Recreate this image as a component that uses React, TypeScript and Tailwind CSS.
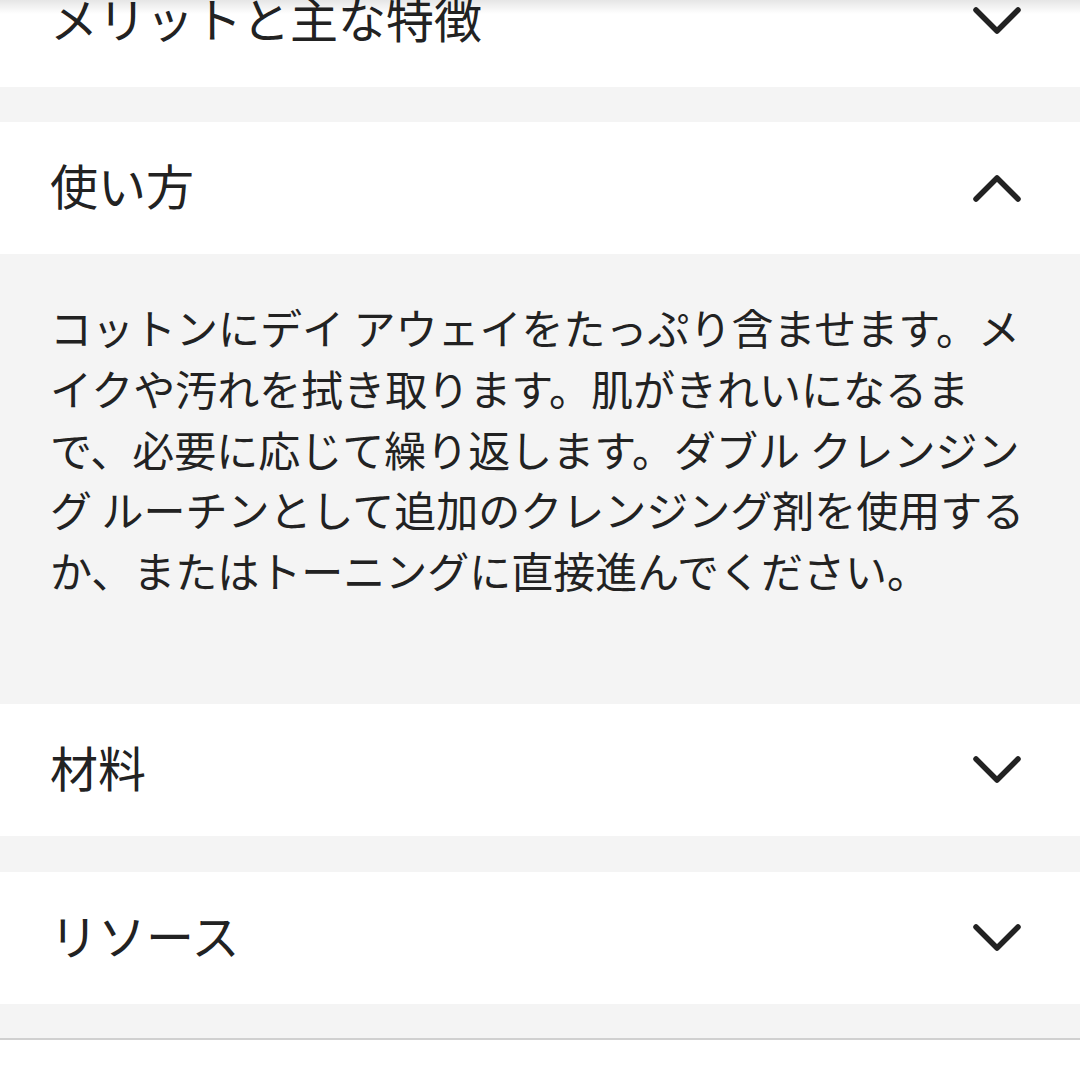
import React from "react";

const font = {
  fontFamily: '"Noto Sans CJK JP", "Noto Sans", sans-serif',
};

function Chevron({ up }: { up?: boolean }) {
  return (
    <svg width="48" height="28" viewBox="0 0 48 28" fill="none" className="shrink-0">
      <polyline
        points={up ? "3,25 24,4 45,25" : "3,3 24,24 45,3"}
        stroke="#222"
        strokeWidth="5.5"
        strokeLinecap="round"
        strokeLinejoin="round"
      />
    </svg>
  );
}

function Header({ title, open }: { title: string; open?: boolean }) {
  return (
    <div className="flex h-[132px] items-center justify-between bg-white pl-[50px] pr-[59px]">
      <span className="mb-[8px] text-[48px] leading-none text-[#222]">{title}</span>
      <Chevron up={open} />
    </div>
  );
}

export default function App() {
  return (
    <div className="relative h-[1080px] w-[1080px] overflow-hidden bg-white" style={font}>
      {/* shadow from the sticky bar above */}
      <div className="pointer-events-none absolute left-0 right-0 top-0 h-[14px] bg-gradient-to-b from-black/10 to-transparent" />

      <div className="-mt-[45px] flex flex-col">
        <Header title="メリットと主な特徴" />
        <div className="h-[35px] bg-[#f4f4f4]" />

        <Header title="使い方" open />
        <div className="h-[450px] bg-[#f4f4f4] pl-[50px] pr-[40px] pt-[43px]">
          <p className="text-[42px] leading-[60.75px] text-[#222]">
            コットンにデイ アウェイをたっぷり含ませます。メイクや汚れを拭き取ります。肌がきれいになるまで、必要に応じて繰り返します。ダブル クレンジング ルーチンとして追加のクレンジング剤を使用するか、またはトーニングに直接進んでください。
          </p>
        </div>

        <Header title="材料" />
        <div className="h-[36px] bg-[#f4f4f4]" />

        <Header title="リソース" />
        <div className="h-[36px] border-b-2 border-[#d0d0d0] bg-[#f4f4f4]" />
        <div className="h-[60px] bg-white" />
      </div>
    </div>
  );
}
